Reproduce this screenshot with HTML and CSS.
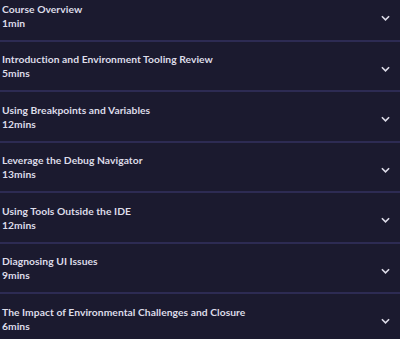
FILE: index.html
```html
<!DOCTYPE html>
<html lang="en">
<head>
    <meta charset="UTF-8">
    <meta name="viewport" content="width=device-width, initial-scale=1.0">
    <title>Course Contents</title>
    <link rel="stylesheet" href="styles.css">
</head>
<body>

    <div class="lessons">
        <!-- Lesson 1 -->
        <div class="lesson">
            <div class="lesson-info">
                <div class="lesson-title">Course Overview</div>
                <div class="lesson-time">1min</div>
            </div>
            <svg class="chevron" viewBox="0 0 10 6"><path d="M1 1l4 4 4-4"/></svg>
        </div>

        <!-- Lesson 2 -->
        <div class="lesson">
            <div class="lesson-info">
                <div class="lesson-title">Introduction and Environment Tooling Review</div>
                <div class="lesson-time">5mins</div>
            </div>
            <svg class="chevron" viewBox="0 0 10 6"><path d="M1 1l4 4 4-4"/></svg>
        </div>

        <!-- Lesson 3 -->
        <div class="lesson">
            <div class="lesson-info">
                <div class="lesson-title">Using Breakpoints and Variables</div>
                <div class="lesson-time">12mins</div>
            </div>
            <svg class="chevron" viewBox="0 0 10 6"><path d="M1 1l4 4 4-4"/></svg>
        </div>

        <!-- Lesson 4 -->
        <div class="lesson">
            <div class="lesson-info">
                <div class="lesson-title">Leverage the Debug Navigator</div>
                <div class="lesson-time">13mins</div>
            </div>
            <svg class="chevron" viewBox="0 0 10 6"><path d="M1 1l4 4 4-4"/></svg>
        </div>

        <!-- Lesson 5 -->
        <div class="lesson">
            <div class="lesson-info">
                <div class="lesson-title">Using Tools Outside the IDE</div>
                <div class="lesson-time">12mins</div>
            </div>
            <svg class="chevron" viewBox="0 0 10 6"><path d="M1 1l4 4 4-4"/></svg>
        </div>

        <!-- Lesson 6 -->
        <div class="lesson">
            <div class="lesson-info">
                <div class="lesson-title">Diagnosing UI Issues</div>
                <div class="lesson-time">9mins</div>
            </div>
            <svg class="chevron" viewBox="0 0 10 6"><path d="M1 1l4 4 4-4"/></svg>
        </div>

        <!-- Lesson 7 -->
        <div class="lesson">
            <div class="lesson-info">
                <div class="lesson-title">The Impact of Environmental Challenges and Closure</div>
                <div class="lesson-time">6mins</div>
            </div>
            <svg class="chevron" viewBox="0 0 10 6"><path d="M1 1l4 4 4-4"/></svg>
        </div>
    </div>

</body>
</html>
```

FILE: styles.css
```css
body {
    font-family: Lato, "Noto Sans", sans-serif;
    background-color: #1b1a2f;
    color: #dddce8;
    margin: 0;
    padding: 0;
    overflow: hidden;
}

/* list is scrolled a little, first row is cut at the top */
.lessons {
    margin-top: -9px;
}

.lesson {
    display: flex;
    align-items: center;
    padding: 10.5px 10px 10px 2px;
    border-bottom: 2px solid #2d2b53;
}

.lesson-info {
    flex: 1;
}

.lesson-title,
.lesson-time {
    font-size: 10.3px;
    font-weight: 700;
    line-height: 14px;
    letter-spacing: 0.05px;
}

.chevron {
    width: 9px;
    height: 6px;
    margin-top: 5px;
    fill: none;
    stroke: #dddce8;
    stroke-width: 1.8;
}
```
